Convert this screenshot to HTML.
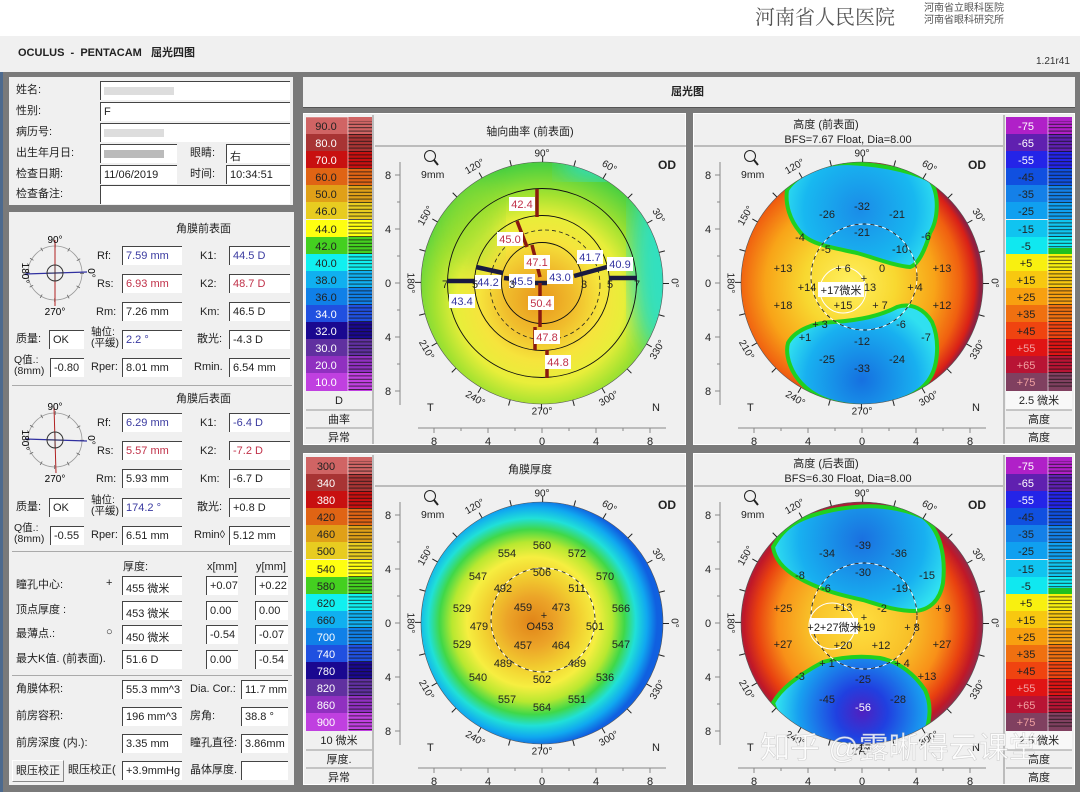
<!DOCTYPE html>
<html><head><meta charset="utf-8"><style>
*{margin:0;padding:0;box-sizing:border-box}
body{width:1080px;height:792px;overflow:hidden;position:relative;background:#7a7a7a;font-family:"Liberation Sans","Noto Sans CJK SC",sans-serif;font-size:11px;color:#222}
.a{position:absolute;white-space:nowrap;line-height:1}
.in{position:absolute;background:#fff;border-top:1px solid #444;border-left:1px solid #444;height:19px;padding:3px 0 0 3px;font-size:11px;white-space:nowrap;overflow:hidden}
.bl{color:#3a3aa0}.rd{color:#c03048}
svg text{font-family:"Liberation Sans","Noto Sans CJK SC",sans-serif}
</style></head><body>
<div class="a" style="left:0;top:0;width:1080px;height:36px;background:#fff"></div>
<div class="a" style="left:755px;top:6px;font-size:20px;color:#555;font-family:'Noto Serif CJK SC',serif">河南省人民医院</div>
<div class="a" style="left:924px;top:3px;font-size:10px;color:#555;line-height:12px">河南省立眼科医院<br>河南省眼科研究所</div>
<div class="a" style="left:0;top:36px;width:1080px;height:36px;background:#f0f0f0"></div>
<div class="a" style="left:18px;top:48px;font-size:11px;font-weight:bold;color:#222">OCULUS &nbsp;- &nbsp;PENTACAM &nbsp; 屈光四图</div>
<div class="a" style="left:1036px;top:57px;font-size:10px;color:#333">1.21r41</div>
<div class="a" style="left:0;top:72px;width:3px;height:720px;background:#4d6a8e"></div>

<!-- info box -->
<div class="a" style="left:9px;top:77px;width:284px;height:128px;background:#f0f0f0"></div>
<div class="a" style="left:16px;top:85px">姓名:</div>
<div class="a" style="left:16px;top:106px">性别:</div>
<div class="a" style="left:16px;top:127px">病历号:</div>
<div class="a" style="left:16px;top:148px">出生年月日:</div>
<div class="a" style="left:16px;top:169px">检查日期:</div>
<div class="a" style="left:16px;top:189px">检查备注:</div>
<div class="in" style="left:100px;top:81px;width:190px"><span style="display:inline-block;width:70px;height:8px;background:#ddd;margin-top:2px"></span></div>
<div class="in" style="left:100px;top:102px;width:190px">F</div>
<div class="in" style="left:100px;top:123px;width:190px"><span style="display:inline-block;width:60px;height:8px;background:#ddd;margin-top:2px"></span></div>
<div class="in" style="left:100px;top:144px;width:77px"><span style="display:inline-block;width:60px;height:8px;background:#bbb;margin-top:2px"></span></div>
<div class="a" style="left:190px;top:148px">眼睛:</div>
<div class="in" style="left:226px;top:144px;width:64px">右</div>
<div class="in" style="left:100px;top:165px;width:77px">11/06/2019</div>
<div class="a" style="left:190px;top:169px">时间:</div>
<div class="in" style="left:226px;top:165px;width:64px">10:34:51</div>
<div class="in" style="left:100px;top:185px;width:190px"></div>

<!-- data box -->
<div class="a" style="left:9px;top:212px;width:285px;height:573px;background:#f0f0f0"></div>
<div class="a" style="left:12px;top:385px;width:280px;height:1px;background:#aaa"></div>
<div class="a" style="left:12px;top:551px;width:280px;height:1px;background:#aaa"></div>
<div class="a" style="left:12px;top:675px;width:280px;height:1px;background:#aaa"></div>

<svg class="a" style="left:0;top:0" width="300" height="792">
 <g transform="translate(55,273)">
  <circle r="27" fill="none" stroke="#999" stroke-width="0.8"/>
  <circle r="27" fill="none" stroke="#666" stroke-width="4" stroke-dasharray="0.8 13.3"/>
  <line x1="0" y1="-33" x2="0" y2="33" stroke="#b02020"/>
  <line x1="-30" y1="1" x2="32" y2="-1" stroke="#3030a0" stroke-width="1.2"/>
  <circle r="8" fill="none" stroke="#333"/><line x1="-8" y1="0" x2="8" y2="0" stroke="#333" stroke-width=".6"/><line x1="0" y1="-8" x2="0" y2="8" stroke="#333" stroke-width=".6"/>
  <text x="0" y="-30" font-size="10" text-anchor="middle">90°</text>
  <text x="0" y="42" font-size="10" text-anchor="middle">270°</text>
  <text transform="translate(-33,0) rotate(90)" font-size="10" text-anchor="middle">180°</text>
  <text transform="translate(33,0) rotate(90)" font-size="10" text-anchor="middle">0°</text>
 </g>
 <g transform="translate(55,440)">
  <circle r="27" fill="none" stroke="#999" stroke-width="0.8"/>
  <circle r="27" fill="none" stroke="#666" stroke-width="4" stroke-dasharray="0.8 13.3"/>
  <line x1="-1" y1="-33" x2="1" y2="33" stroke="#b02020"/>
  <line x1="-30" y1="-1" x2="32" y2="1" stroke="#3030a0" stroke-width="1.2"/>
  <circle r="8" fill="none" stroke="#333"/><line x1="-8" y1="0" x2="8" y2="0" stroke="#333" stroke-width=".6"/><line x1="0" y1="-8" x2="0" y2="8" stroke="#333" stroke-width=".6"/>
  <text x="0" y="-30" font-size="10" text-anchor="middle">90°</text>
  <text x="0" y="42" font-size="10" text-anchor="middle">270°</text>
  <text transform="translate(-33,0) rotate(90)" font-size="10" text-anchor="middle">180°</text>
  <text transform="translate(33,0) rotate(90)" font-size="10" text-anchor="middle">0°</text>
 </g>
</svg>

<div class="a" style="left:176px;top:224px">角膜前表面</div>
<div class="a" style="left:97px;top:251px">Rf:</div><div class="in" style="left:122px;top:246px;width:60px"><span class="bl">7.59 mm</span></div>
<div class="a" style="left:200px;top:251px">K1:</div><div class="in" style="left:229px;top:246px;width:61px"><span class="bl">44.5 D</span></div>
<div class="a" style="left:97px;top:279px">Rs:</div><div class="in" style="left:122px;top:274px;width:60px"><span class="rd">6.93 mm</span></div>
<div class="a" style="left:200px;top:279px">K2:</div><div class="in" style="left:229px;top:274px;width:61px"><span class="rd">48.7 D</span></div>
<div class="a" style="left:96px;top:307px">Rm:</div><div class="in" style="left:122px;top:302px;width:60px">7.26 mm</div>
<div class="a" style="left:200px;top:307px">Km:</div><div class="in" style="left:229px;top:302px;width:61px">46.5 D</div>
<div class="a" style="left:16px;top:334px">质量:</div><div class="in" style="left:49px;top:330px;width:35px">OK</div>
<div class="a" style="left:91px;top:327px;font-size:10.5px;line-height:11px">轴位:<br>(平缓)</div><div class="in" style="left:122px;top:330px;width:60px"><span class="bl">2.2 °</span></div>
<div class="a" style="left:197px;top:334px">散光:</div><div class="in" style="left:229px;top:330px;width:61px">-4.3 D</div>
<div class="a" style="left:14px;top:355px;font-size:10.5px;line-height:11px">Q值.:<br>(8mm)</div><div class="in" style="left:50px;top:358px;width:34px">-0.80</div>
<div class="a" style="left:91px;top:362px">Rper:</div><div class="in" style="left:122px;top:358px;width:60px">8.01 mm</div>
<div class="a" style="left:194px;top:362px">Rmin.</div><div class="in" style="left:229px;top:358px;width:61px">6.54 mm</div>

<div class="a" style="left:176px;top:394px">角膜后表面</div>
<div class="a" style="left:97px;top:418px">Rf:</div><div class="in" style="left:122px;top:413px;width:60px"><span class="bl">6.29 mm</span></div>
<div class="a" style="left:200px;top:418px">K1:</div><div class="in" style="left:229px;top:413px;width:61px"><span class="bl">-6.4 D</span></div>
<div class="a" style="left:97px;top:446px">Rs:</div><div class="in" style="left:122px;top:441px;width:60px"><span class="rd">5.57 mm</span></div>
<div class="a" style="left:200px;top:446px">K2:</div><div class="in" style="left:229px;top:441px;width:61px"><span class="rd">-7.2 D</span></div>
<div class="a" style="left:96px;top:474px">Rm:</div><div class="in" style="left:122px;top:469px;width:60px">5.93 mm</div>
<div class="a" style="left:200px;top:474px">Km:</div><div class="in" style="left:229px;top:469px;width:61px">-6.7 D</div>
<div class="a" style="left:16px;top:502px">质量:</div><div class="in" style="left:49px;top:498px;width:35px">OK</div>
<div class="a" style="left:91px;top:495px;font-size:10.5px;line-height:11px">轴位:<br>(平缓)</div><div class="in" style="left:122px;top:498px;width:60px"><span class="bl">174.2 °</span></div>
<div class="a" style="left:197px;top:502px">散光:</div><div class="in" style="left:229px;top:498px;width:61px">+0.8 D</div>
<div class="a" style="left:14px;top:523px;font-size:10.5px;line-height:11px">Q值.:<br>(8mm)</div><div class="in" style="left:50px;top:526px;width:34px">-0.55</div>
<div class="a" style="left:91px;top:530px">Rper:</div><div class="in" style="left:122px;top:526px;width:60px">6.51 mm</div>
<div class="a" style="left:194px;top:530px">Rmin◊</div><div class="in" style="left:229px;top:526px;width:61px">5.12 mm</div>

<div class="a" style="left:123px;top:562px">厚度:</div>
<div class="a" style="left:207px;top:562px">x[mm]</div>
<div class="a" style="left:256px;top:562px">y[mm]</div>
<div class="a" style="left:16px;top:580px">瞳孔中心:</div><div class="a" style="left:106px;top:578px">+</div>
<div class="in" style="left:122px;top:576px;width:60px">455 微米</div><div class="in" style="left:206px;top:576px;width:32px">+0.07</div><div class="in" style="left:255px;top:576px;width:33px">+0.22</div>
<div class="a" style="left:16px;top:605px">顶点厚度 :</div>
<div class="in" style="left:122px;top:601px;width:60px">453 微米</div><div class="in" style="left:206px;top:601px;width:32px">0.00</div><div class="in" style="left:255px;top:601px;width:33px">0.00</div>
<div class="a" style="left:16px;top:629px">最薄点.:</div><div class="a" style="left:106px;top:627px">○</div>
<div class="in" style="left:122px;top:625px;width:60px">450 微米</div><div class="in" style="left:206px;top:625px;width:32px">-0.54</div><div class="in" style="left:255px;top:625px;width:33px">-0.07</div>
<div class="a" style="left:16px;top:654px">最大K值. (前表面).</div>
<div class="in" style="left:122px;top:650px;width:60px">51.6 D</div><div class="in" style="left:206px;top:650px;width:32px">0.00</div><div class="in" style="left:255px;top:650px;width:33px">-0.54</div>

<div class="a" style="left:16px;top:684px">角膜体积:</div><div class="in" style="left:122px;top:680px;width:60px">55.3 mm^3</div>
<div class="a" style="left:190px;top:684px">Dia. Cor.:</div><div class="in" style="left:241px;top:680px;width:47px">11.7 mm</div>
<div class="a" style="left:16px;top:711px">前房容积:</div><div class="in" style="left:122px;top:707px;width:60px">196 mm^3</div>
<div class="a" style="left:190px;top:711px">房角:</div><div class="in" style="left:241px;top:707px;width:47px">38.8 °</div>
<div class="a" style="left:16px;top:738px">前房深度 (内.):</div><div class="in" style="left:122px;top:734px;width:60px">3.35 mm</div>
<div class="a" style="left:190px;top:738px">瞳孔直径:</div><div class="in" style="left:241px;top:734px;width:47px">3.86mm</div>
<div class="a" style="left:12px;top:760px;width:52px;height:22px;background:#f0f0f0;border:1px solid #888;border-top-color:#fff;border-left-color:#fff;padding:5px 0 0 3px">眼压校正</div>
<div class="a" style="left:68px;top:765px">眼压校正(</div><div class="in" style="left:122px;top:761px;width:60px">+3.9mmHg</div>
<div class="a" style="left:190px;top:765px">晶体厚度.</div><div class="in" style="left:241px;top:761px;width:47px"></div>

<!-- header -->
<div class="a" style="left:303px;top:77px;width:772px;height:31px;background:#f0f0f0;border-bottom:1px solid #555"></div>
<div class="a" style="left:671px;top:87px;font-weight:bold">屈光图</div>

<svg class="a" style="left:0;top:0" width="1080" height="792">
<defs>
 <pattern id="h" width="30" height="3.4" patternUnits="userSpaceOnUse"><line x1="0" y1="0.5" x2="30" y2="0.5" stroke="#111" stroke-width="0.8"/></pattern>
 <radialGradient id="gK" cx="540" cy="300" r="135" gradientUnits="userSpaceOnUse">
  <stop offset="0" stop-color="#e8961c"/><stop offset=".25" stop-color="#f0bc2c"/><stop offset=".45" stop-color="#f6e43c"/><stop offset=".62" stop-color="#e8ee3a"/><stop offset=".78" stop-color="#a4e230"/><stop offset="1" stop-color="#4cd040"/></radialGradient>
 <radialGradient id="gE" cx="850" cy="284" r="130" gradientUnits="userSpaceOnUse">
  <stop offset="0" stop-color="#fff060"/><stop offset=".35" stop-color="#f8d830"/><stop offset=".65" stop-color="#f8a418"/><stop offset=".85" stop-color="#f06010"/><stop offset=".96" stop-color="#d82018"/><stop offset="1" stop-color="#902040"/></radialGradient>
 <radialGradient id="gE2" cx="860" cy="623" r="126" gradientUnits="userSpaceOnUse">
  <stop offset="0" stop-color="#ffe040"/><stop offset=".4" stop-color="#f8c028"/><stop offset=".65" stop-color="#f89018"/><stop offset=".82" stop-color="#e84010"/><stop offset=".92" stop-color="#c01828"/><stop offset="1" stop-color="#803058"/></radialGradient>
 <radialGradient id="gT" cx="532" cy="622" r="125" gradientUnits="userSpaceOnUse">
  <stop offset="0" stop-color="#e08418"/><stop offset=".2" stop-color="#eca428"/><stop offset=".38" stop-color="#f2d030"/><stop offset=".52" stop-color="#f6ee40"/><stop offset=".64" stop-color="#b8e830"/><stop offset=".74" stop-color="#40d848"/><stop offset=".83" stop-color="#20e0d8"/><stop offset=".92" stop-color="#10a8f0"/><stop offset="1" stop-color="#1060e0"/></radialGradient>
 <radialGradient id="gB1" cx="860" cy="210" r="80" gradientUnits="userSpaceOnUse"><stop offset="0" stop-color="#1a8ce8"/><stop offset=".7" stop-color="#18b8f0"/><stop offset="1" stop-color="#30e0f0"/></radialGradient>
 <radialGradient id="gB2" cx="862" cy="380" r="80" gradientUnits="userSpaceOnUse"><stop offset="0" stop-color="#1670e0"/><stop offset=".7" stop-color="#18b0f0"/><stop offset="1" stop-color="#30e0f0"/></radialGradient>
 <radialGradient id="gB3" cx="862" cy="540" r="90" gradientUnits="userSpaceOnUse"><stop offset="0" stop-color="#1a70e0"/><stop offset=".7" stop-color="#18b0f0"/><stop offset="1" stop-color="#30e0f0"/></radialGradient>
 <radialGradient id="gB4" cx="862" cy="712" r="85" gradientUnits="userSpaceOnUse"><stop offset="0" stop-color="#5020c0"/><stop offset=".3" stop-color="#2040e0"/><stop offset=".75" stop-color="#18a0f0"/><stop offset="1" stop-color="#30e0f0"/></radialGradient>
 <filter id="bl"><feGaussianBlur stdDeviation="12"/></filter>
 <clipPath id="c1"><circle cx="542" cy="283" r="121"/></clipPath>
 <clipPath id="c2"><circle cx="862" cy="283" r="121"/></clipPath>
 <clipPath id="c3"><circle cx="542" cy="623" r="121"/></clipPath>
 <clipPath id="c4"><circle cx="862" cy="623" r="121"/></clipPath>
</defs>

<!-- panel frames -->
<g fill="#f0f0f0" stroke="#fff" stroke-width="1">
 <rect x="303.5" y="113.5" width="382" height="331"/><rect x="693.5" y="113.5" width="381" height="331"/>
 <rect x="303.5" y="453.5" width="382" height="331"/><rect x="693.5" y="453.5" width="381" height="331"/>
</g>
<g stroke="#888" stroke-width="1">
 <line x1="373" y1="115" x2="373" y2="444"/><line x1="1004" y1="115" x2="1004" y2="444"/>
 <line x1="373" y1="455" x2="373" y2="784"/><line x1="1004" y1="455" x2="1004" y2="784"/>
 <line x1="375" y1="146" x2="686" y2="146"/><line x1="694" y1="146" x2="1003" y2="146"/>
 <line x1="375" y1="486" x2="686" y2="486"/><line x1="694" y1="486" x2="1003" y2="486"/>
</g>
<g font-size="11" text-anchor="middle" fill="#222">
 <text x="530" y="135">轴向曲率 (前表面)</text>
 <text x="826" y="128">高度 (前表面)</text><text x="848" y="143">BFS=7.67 Float, Dia=8.00</text>
 <text x="530" y="473">角膜厚度</text>
 <text x="826" y="467">高度 (后表面)</text><text x="848" y="482">BFS=6.30 Float, Dia=8.00</text>
</g>

<!-- SCALES -->
<g font-size="11" text-anchor="middle">
 <!-- TL -->
 <g transform="translate(306,117)">
  <rect y="0" width="66" height="17" fill="#d06464"/><rect y="17" width="66" height="17" fill="#a83434"/><rect y="34" width="66" height="17" fill="#c81010"/><rect y="51" width="66" height="17" fill="#e06414"/><rect y="68" width="66" height="17" fill="#e0a018"/><rect y="85" width="66" height="17" fill="#e8cc20"/><rect y="103" width="66" height="17" fill="#ffff10"/><rect y="120" width="66" height="17" fill="#44d020"/><rect y="137" width="66" height="17" fill="#10f0f0"/><rect y="154" width="66" height="17" fill="#10b0f0"/><rect y="171" width="66" height="17" fill="#1080e8"/><rect y="188" width="66" height="17" fill="#2050e0"/><rect y="205" width="66" height="17" fill="#1a0890"/><rect y="222" width="66" height="17" fill="#6030a0"/><rect y="239" width="66" height="17" fill="#9030c0"/><rect y="256" width="66" height="18" fill="#c040e0"/>
  <rect x="42" y="4" width="24" height="270" fill="url(#h)"/>
  <g stroke="#fff" stroke-width=".6"><line x1="0" y1="0" x2="42" y2="0"/><line x1="42" y1="0" x2="42" y2="274"/></g>
  <g fill="#222"><text x="20" y="13">90.0</text><text x="20" y="64">60.0</text><text x="20" y="81">50.0</text><text x="20" y="98">46.0</text><text x="20" y="116">44.0</text><text x="20" y="133">42.0</text><text x="20" y="150">40.0</text><text x="20" y="167">38.0</text><text x="20" y="184">36.0</text></g>
  <g fill="#fff"><text x="20" y="30">80.0</text><text x="20" y="47">70.0</text><text x="20" y="201">34.0</text><text x="20" y="218">32.0</text><text x="20" y="235">30.0</text><text x="20" y="252">20.0</text><text x="20" y="269">10.0</text></g>
  <g stroke="#999"><line x1="0" y1="293" x2="66" y2="293"/><line x1="0" y1="311" x2="66" y2="311"/></g>
  <g fill="#222"><text x="33" y="287">D</text><text x="33" y="306">曲率</text><text x="33" y="324">异常</text></g>
 </g>
 <!-- BL -->
 <g transform="translate(306,457)">
  <rect y="0" width="66" height="17" fill="#d06464"/><rect y="17" width="66" height="17" fill="#a83434"/><rect y="34" width="66" height="17" fill="#c81010"/><rect y="51" width="66" height="17" fill="#e06414"/><rect y="68" width="66" height="17" fill="#e0a018"/><rect y="85" width="66" height="17" fill="#e8cc20"/><rect y="103" width="66" height="17" fill="#ffff10"/><rect y="120" width="66" height="17" fill="#44d020"/><rect y="137" width="66" height="17" fill="#10f0f0"/><rect y="154" width="66" height="17" fill="#10b0f0"/><rect y="171" width="66" height="17" fill="#1080e8"/><rect y="188" width="66" height="17" fill="#2050e0"/><rect y="205" width="66" height="17" fill="#1a0890"/><rect y="222" width="66" height="17" fill="#6030a0"/><rect y="239" width="66" height="17" fill="#9030c0"/><rect y="256" width="66" height="18" fill="#c040e0"/>
  <rect x="42" y="4" width="24" height="270" fill="url(#h)"/>
  <g stroke="#fff" stroke-width=".6"><line x1="42" y1="0" x2="42" y2="274"/></g>
  <g fill="#222"><text x="20" y="13">300</text><text x="20" y="64">420</text><text x="20" y="81">460</text><text x="20" y="98">500</text><text x="20" y="116">540</text><text x="20" y="133">580</text><text x="20" y="150">620</text><text x="20" y="167">660</text></g>
  <g fill="#fff"><text x="20" y="30">340</text><text x="20" y="47">380</text><text x="20" y="184">700</text><text x="20" y="201">740</text><text x="20" y="218">780</text><text x="20" y="235">820</text><text x="20" y="252">860</text><text x="20" y="269">900</text></g>
  <g stroke="#999"><line x1="0" y1="293" x2="66" y2="293"/><line x1="0" y1="311" x2="66" y2="311"/></g>
  <g fill="#222"><text x="33" y="287">10 微米</text><text x="33" y="306">厚度.</text><text x="33" y="324">异常</text></g>
 </g>
 <!-- TR -->
 <g transform="translate(1006,117)">
  <rect y="0" width="66" height="17" fill="#b020c8"/><rect y="17" width="66" height="17" fill="#6020b0"/><rect y="34" width="66" height="17" fill="#2424e8"/><rect y="51" width="66" height="17" fill="#1050e0"/><rect y="68" width="66" height="17" fill="#1480e8"/><rect y="85" width="66" height="17" fill="#10a0f0"/><rect y="103" width="66" height="17" fill="#10c4f0"/><rect y="120" width="66" height="17" fill="#10e8f0"/><rect y="137" width="66" height="17" fill="#f8f010"/><rect y="154" width="66" height="17" fill="#f8c810"/><rect y="171" width="66" height="17" fill="#f8a010"/><rect y="188" width="66" height="17" fill="#f07010"/><rect y="205" width="66" height="17" fill="#f04410"/><rect y="222" width="66" height="17" fill="#e01414"/><rect y="239" width="66" height="17" fill="#b81434"/><rect y="256" width="66" height="18" fill="#804060"/>
  <rect x="42" y="4" width="24" height="268" fill="url(#h)"/><rect x="42" y="131" width="24" height="6" fill="#20c020"/>
  <g stroke="#fff" stroke-width=".6"><line x1="42" y1="0" x2="42" y2="274"/></g>
  <g fill="#fff"><text x="20" y="13">-75</text><text x="20" y="30">-65</text><text x="20" y="47">-55</text></g>
  <g fill="#222"><text x="20" y="64">-45</text><text x="20" y="81">-35</text><text x="20" y="98">-25</text><text x="20" y="116">-15</text><text x="20" y="133">-5</text><text x="20" y="150">+5</text><text x="20" y="167">+15</text><text x="20" y="184">+25</text><text x="20" y="201">+35</text><text x="20" y="218">+45</text></g>
  <g fill="#f0a0a0"><text x="20" y="235">+55</text><text x="20" y="252">+65</text><text x="20" y="269">+75</text></g>
  <rect x="0" y="274" width="66" height="19" fill="#f8f8f8"/>
  <g stroke="#999"><line x1="0" y1="293" x2="66" y2="293"/><line x1="0" y1="311" x2="66" y2="311"/></g>
  <g fill="#222"><text x="33" y="287">2.5 微米</text><text x="33" y="306">高度</text><text x="33" y="324">高度</text></g>
 </g>
 <!-- BR -->
 <g transform="translate(1006,457)">
  <rect y="0" width="66" height="17" fill="#b020c8"/><rect y="17" width="66" height="17" fill="#6020b0"/><rect y="34" width="66" height="17" fill="#2424e8"/><rect y="51" width="66" height="17" fill="#1050e0"/><rect y="68" width="66" height="17" fill="#1480e8"/><rect y="85" width="66" height="17" fill="#10a0f0"/><rect y="103" width="66" height="17" fill="#10c4f0"/><rect y="120" width="66" height="17" fill="#10e8f0"/><rect y="137" width="66" height="17" fill="#f8f010"/><rect y="154" width="66" height="17" fill="#f8c810"/><rect y="171" width="66" height="17" fill="#f8a010"/><rect y="188" width="66" height="17" fill="#f07010"/><rect y="205" width="66" height="17" fill="#f04410"/><rect y="222" width="66" height="17" fill="#e01414"/><rect y="239" width="66" height="17" fill="#b81434"/><rect y="256" width="66" height="18" fill="#804060"/>
  <rect x="42" y="4" width="24" height="268" fill="url(#h)"/><rect x="42" y="131" width="24" height="6" fill="#20c020"/>
  <g stroke="#fff" stroke-width=".6"><line x1="42" y1="0" x2="42" y2="274"/></g>
  <g fill="#fff"><text x="20" y="13">-75</text><text x="20" y="30">-65</text><text x="20" y="47">-55</text></g>
  <g fill="#222"><text x="20" y="64">-45</text><text x="20" y="81">-35</text><text x="20" y="98">-25</text><text x="20" y="116">-15</text><text x="20" y="133">-5</text><text x="20" y="150">+5</text><text x="20" y="167">+15</text><text x="20" y="184">+25</text><text x="20" y="201">+35</text><text x="20" y="218">+45</text></g>
  <g fill="#f0a0a0"><text x="20" y="235">+55</text><text x="20" y="252">+65</text><text x="20" y="269">+75</text></g>
  <rect x="0" y="274" width="66" height="19" fill="#f8f8f8"/>
  <g stroke="#999"><line x1="0" y1="293" x2="66" y2="293"/><line x1="0" y1="311" x2="66" y2="311"/></g>
  <g fill="#222"><text x="33" y="287">2.5 微米</text><text x="33" y="306">高度</text><text x="33" y="324">高度</text></g>
 </g>
</g>

<!-- MAP FILLS -->
<g clip-path="url(#c1)">
 <rect x="420" y="160" width="244" height="246" fill="url(#gK)"/>
 <ellipse cx="660" cy="260" rx="28" ry="90" fill="#30e0c0" filter="url(#bl)"/>
 <ellipse cx="600" cy="165" rx="40" ry="14" fill="#30e0d0" filter="url(#bl)"/>
 <ellipse cx="470" cy="220" rx="30" ry="50" fill="#90dc30" opacity=".5" filter="url(#bl)"/>
</g>
<g clip-path="url(#c2)">
 <rect x="740" y="160" width="244" height="246" fill="url(#gE)"/>
 <path d="M787,190 C800,170 830,163 847,163 C870,164 900,167 930,180 C940,195 938,220 930,233 C925,250 918,265 910,267 C895,266 875,258 857,253 C835,248 810,245 800,232 C790,220 785,205 787,190Z" fill="url(#gB1)" stroke="#20d020" stroke-width="4"/>
 <path d="M788,343 C795,330 815,322 835,322 C860,320 880,316 897,307 C912,302 925,310 932,322 C940,340 938,365 930,378 C920,395 895,405 863,406 C835,405 810,398 795,375 C787,362 786,350 788,343Z" fill="url(#gB2)" stroke="#20d020" stroke-width="4"/>
</g>
<g clip-path="url(#c3)">
 <rect x="420" y="500" width="244" height="246" fill="url(#gT)"/>
</g>
<g clip-path="url(#c4)">
 <rect x="740" y="500" width="244" height="246" fill="url(#gE2)"/>
 <path d="M773,547 C785,525 800,517 833,510 C860,505 890,503 923,517 C940,530 946,555 943,583 C940,600 930,610 915,611 C895,611 880,605 863,600 C840,595 820,590 797,577 C785,570 775,560 773,547Z" fill="url(#gB3)" stroke="#20d020" stroke-width="4"/>
 <path d="M773,703 C780,690 795,677 823,662 C845,656 865,656 880,658 C900,662 915,675 925,690 C932,705 930,720 925,735 C900,750 860,748 830,742 C800,735 780,725 773,703Z" fill="url(#gB4)" stroke="#20d020" stroke-width="4"/>
</g>

<!-- circle edges/ticks/axes per map -->
<g id="ax1" transform="translate(542,283)" font-size="10" fill="#222">
 <circle r="121" fill="none" stroke="#555" stroke-width=".6"/>
 <circle r="124" fill="none" stroke="#222" stroke-width="6" stroke-dasharray="1 31.46"/>
 <line x1="-142" y1="-121" x2="-142" y2="122" stroke="#888"/>
 <g stroke="#888"><line x1="-147" y1="-108" x2="-142" y2="-108"/><line x1="-147" y1="-54" x2="-142" y2="-54"/><line x1="-147" y1="0" x2="-142" y2="0"/><line x1="-147" y1="54" x2="-142" y2="54"/><line x1="-147" y1="108" x2="-142" y2="108"/><line x1="-145" y1="-81" x2="-142" y2="-81"/><line x1="-145" y1="-27" x2="-142" y2="-27"/><line x1="-145" y1="27" x2="-142" y2="27"/><line x1="-145" y1="81" x2="-142" y2="81"/>
 <line x1="-124" y1="145" x2="124" y2="145"/><line x1="-108" y1="145" x2="-108" y2="150"/><line x1="-54" y1="145" x2="-54" y2="150"/><line x1="0" y1="145" x2="0" y2="150"/><line x1="54" y1="145" x2="54" y2="150"/><line x1="108" y1="145" x2="108" y2="150"/><line x1="-81" y1="145" x2="-81" y2="148"/><line x1="-27" y1="145" x2="-27" y2="148"/><line x1="27" y1="145" x2="27" y2="148"/><line x1="81" y1="145" x2="81" y2="148"/></g>
 <g font-size="11" text-anchor="middle"><text x="-154" y="-104">8</text><text x="-154" y="-50">4</text><text x="-154" y="4">0</text><text x="-154" y="58">4</text><text x="-154" y="112">8</text>
 <text x="-108" y="162">8</text><text x="-54" y="162">4</text><text x="0" y="162">0</text><text x="54" y="162">4</text><text x="108" y="162">8</text></g>
 <g text-anchor="middle" dominant-baseline="central"><text x="0" y="-129">90°</text><text x="0" y="129">270°</text>
 <text transform="translate(67,-116) rotate(30)">60°</text><text transform="translate(116,-67) rotate(60)">30°</text><text transform="translate(132,0) rotate(90)">0°</text><text transform="translate(116,67) rotate(-60)">330°</text><text transform="translate(67,116) rotate(-30)">300°</text><text transform="translate(-67,116) rotate(30)">240°</text><text transform="translate(-116,67) rotate(60)">210°</text><text transform="translate(-132,0) rotate(90)">180°</text><text transform="translate(-116,-67) rotate(-60)">150°</text><text transform="translate(-67,-116) rotate(-30)">120°</text></g>
 <text x="116" y="-114" font-size="12" font-weight="bold">OD</text>
 <circle cx="-112" cy="-127" r="5.5" fill="none" stroke="#222"/><line x1="-108" y1="-123" x2="-104" y2="-118" stroke="#222" stroke-width="2"/>
 <text x="-121" y="-105" font-size="10.5">9mm</text>
 <text x="-115" y="128" font-size="11">T</text><text x="110" y="128" font-size="11">N</text>
</g>
<g transform="translate(862,283)" font-size="10" fill="#222">
 <circle r="121" fill="none" stroke="#555" stroke-width=".6"/>
 <circle r="124" fill="none" stroke="#222" stroke-width="6" stroke-dasharray="1 31.46"/>
 <line x1="-142" y1="-121" x2="-142" y2="122" stroke="#888"/>
 <g stroke="#888"><line x1="-147" y1="-108" x2="-142" y2="-108"/><line x1="-147" y1="-54" x2="-142" y2="-54"/><line x1="-147" y1="0" x2="-142" y2="0"/><line x1="-147" y1="54" x2="-142" y2="54"/><line x1="-147" y1="108" x2="-142" y2="108"/><line x1="-145" y1="-81" x2="-142" y2="-81"/><line x1="-145" y1="-27" x2="-142" y2="-27"/><line x1="-145" y1="27" x2="-142" y2="27"/><line x1="-145" y1="81" x2="-142" y2="81"/>
 <line x1="-124" y1="145" x2="124" y2="145"/><line x1="-108" y1="145" x2="-108" y2="150"/><line x1="-54" y1="145" x2="-54" y2="150"/><line x1="0" y1="145" x2="0" y2="150"/><line x1="54" y1="145" x2="54" y2="150"/><line x1="108" y1="145" x2="108" y2="150"/><line x1="-81" y1="145" x2="-81" y2="148"/><line x1="-27" y1="145" x2="-27" y2="148"/><line x1="27" y1="145" x2="27" y2="148"/><line x1="81" y1="145" x2="81" y2="148"/></g>
 <g font-size="11" text-anchor="middle"><text x="-154" y="-104">8</text><text x="-154" y="-50">4</text><text x="-154" y="4">0</text><text x="-154" y="58">4</text><text x="-154" y="112">8</text>
 <text x="-108" y="162">8</text><text x="-54" y="162">4</text><text x="0" y="162">0</text><text x="54" y="162">4</text><text x="108" y="162">8</text></g>
 <g text-anchor="middle" dominant-baseline="central"><text x="0" y="-129">90°</text><text x="0" y="129">270°</text>
 <text transform="translate(67,-116) rotate(30)">60°</text><text transform="translate(116,-67) rotate(60)">30°</text><text transform="translate(132,0) rotate(90)">0°</text><text transform="translate(116,67) rotate(-60)">330°</text><text transform="translate(67,116) rotate(-30)">300°</text><text transform="translate(-67,116) rotate(30)">240°</text><text transform="translate(-116,67) rotate(60)">210°</text><text transform="translate(-132,0) rotate(90)">180°</text><text transform="translate(-116,-67) rotate(-60)">150°</text><text transform="translate(-67,-116) rotate(-30)">120°</text></g>
 <text x="106" y="-114" font-size="12" font-weight="bold">OD</text>
 <circle cx="-112" cy="-127" r="5.5" fill="none" stroke="#222"/><line x1="-108" y1="-123" x2="-104" y2="-118" stroke="#222" stroke-width="2"/>
 <text x="-121" y="-105" font-size="10.5">9mm</text>
 <text x="-115" y="128" font-size="11">T</text><text x="110" y="128" font-size="11">N</text>
</g>
<g transform="translate(542,623)" font-size="10" fill="#222">
 <circle r="121" fill="none" stroke="#555" stroke-width=".6"/>
 <circle r="124" fill="none" stroke="#222" stroke-width="6" stroke-dasharray="1 31.46"/>
 <line x1="-142" y1="-121" x2="-142" y2="122" stroke="#888"/>
 <g stroke="#888"><line x1="-147" y1="-108" x2="-142" y2="-108"/><line x1="-147" y1="-54" x2="-142" y2="-54"/><line x1="-147" y1="0" x2="-142" y2="0"/><line x1="-147" y1="54" x2="-142" y2="54"/><line x1="-147" y1="108" x2="-142" y2="108"/><line x1="-145" y1="-81" x2="-142" y2="-81"/><line x1="-145" y1="-27" x2="-142" y2="-27"/><line x1="-145" y1="27" x2="-142" y2="27"/><line x1="-145" y1="81" x2="-142" y2="81"/>
 <line x1="-124" y1="145" x2="124" y2="145"/><line x1="-108" y1="145" x2="-108" y2="150"/><line x1="-54" y1="145" x2="-54" y2="150"/><line x1="0" y1="145" x2="0" y2="150"/><line x1="54" y1="145" x2="54" y2="150"/><line x1="108" y1="145" x2="108" y2="150"/><line x1="-81" y1="145" x2="-81" y2="148"/><line x1="-27" y1="145" x2="-27" y2="148"/><line x1="27" y1="145" x2="27" y2="148"/><line x1="81" y1="145" x2="81" y2="148"/></g>
 <g font-size="11" text-anchor="middle"><text x="-154" y="-104">8</text><text x="-154" y="-50">4</text><text x="-154" y="4">0</text><text x="-154" y="58">4</text><text x="-154" y="112">8</text>
 <text x="-108" y="162">8</text><text x="-54" y="162">4</text><text x="0" y="162">0</text><text x="54" y="162">4</text><text x="108" y="162">8</text></g>
 <g text-anchor="middle" dominant-baseline="central"><text x="0" y="-129">90°</text><text x="0" y="129">270°</text>
 <text transform="translate(67,-116) rotate(30)">60°</text><text transform="translate(116,-67) rotate(60)">30°</text><text transform="translate(132,0) rotate(90)">0°</text><text transform="translate(116,67) rotate(-60)">330°</text><text transform="translate(67,116) rotate(-30)">300°</text><text transform="translate(-67,116) rotate(30)">240°</text><text transform="translate(-116,67) rotate(60)">210°</text><text transform="translate(-132,0) rotate(90)">180°</text><text transform="translate(-116,-67) rotate(-60)">150°</text><text transform="translate(-67,-116) rotate(-30)">120°</text></g>
 <text x="116" y="-114" font-size="12" font-weight="bold">OD</text>
 <circle cx="-112" cy="-127" r="5.5" fill="none" stroke="#222"/><line x1="-108" y1="-123" x2="-104" y2="-118" stroke="#222" stroke-width="2"/>
 <text x="-121" y="-105" font-size="10.5">9mm</text>
 <text x="-115" y="128" font-size="11">T</text><text x="110" y="128" font-size="11">N</text>
</g>
<g transform="translate(862,623)" font-size="10" fill="#222">
 <circle r="121" fill="none" stroke="#555" stroke-width=".6"/>
 <circle r="124" fill="none" stroke="#222" stroke-width="6" stroke-dasharray="1 31.46"/>
 <line x1="-142" y1="-121" x2="-142" y2="122" stroke="#888"/>
 <g stroke="#888"><line x1="-147" y1="-108" x2="-142" y2="-108"/><line x1="-147" y1="-54" x2="-142" y2="-54"/><line x1="-147" y1="0" x2="-142" y2="0"/><line x1="-147" y1="54" x2="-142" y2="54"/><line x1="-147" y1="108" x2="-142" y2="108"/><line x1="-145" y1="-81" x2="-142" y2="-81"/><line x1="-145" y1="-27" x2="-142" y2="-27"/><line x1="-145" y1="27" x2="-142" y2="27"/><line x1="-145" y1="81" x2="-142" y2="81"/>
 <line x1="-124" y1="145" x2="124" y2="145"/><line x1="-108" y1="145" x2="-108" y2="150"/><line x1="-54" y1="145" x2="-54" y2="150"/><line x1="0" y1="145" x2="0" y2="150"/><line x1="54" y1="145" x2="54" y2="150"/><line x1="108" y1="145" x2="108" y2="150"/><line x1="-81" y1="145" x2="-81" y2="148"/><line x1="-27" y1="145" x2="-27" y2="148"/><line x1="27" y1="145" x2="27" y2="148"/><line x1="81" y1="145" x2="81" y2="148"/></g>
 <g font-size="11" text-anchor="middle"><text x="-154" y="-104">8</text><text x="-154" y="-50">4</text><text x="-154" y="4">0</text><text x="-154" y="58">4</text><text x="-154" y="112">8</text>
 <text x="-108" y="162">8</text><text x="-54" y="162">4</text><text x="0" y="162">0</text><text x="54" y="162">4</text><text x="108" y="162">8</text></g>
 <g text-anchor="middle" dominant-baseline="central"><text x="0" y="-129">90°</text><text x="0" y="129">270°</text>
 <text transform="translate(67,-116) rotate(30)">60°</text><text transform="translate(116,-67) rotate(60)">30°</text><text transform="translate(132,0) rotate(90)">0°</text><text transform="translate(116,67) rotate(-60)">330°</text><text transform="translate(67,116) rotate(-30)">300°</text><text transform="translate(-67,116) rotate(30)">240°</text><text transform="translate(-116,67) rotate(60)">210°</text><text transform="translate(-132,0) rotate(90)">180°</text><text transform="translate(-116,-67) rotate(-60)">150°</text><text transform="translate(-67,-116) rotate(-30)">120°</text></g>
 <text x="106" y="-114" font-size="12" font-weight="bold">OD</text>
 <circle cx="-112" cy="-127" r="5.5" fill="none" stroke="#222"/><line x1="-108" y1="-123" x2="-104" y2="-118" stroke="#222" stroke-width="2"/>
 <text x="-121" y="-105" font-size="10.5">9mm</text>
 <text x="-115" y="128" font-size="11">T</text><text x="110" y="128" font-size="11">N</text>
</g>

<!-- TL overlays -->
<g fill="none" stroke="#111" stroke-width="0.9">
 <circle cx="542" cy="283" r="40.5"/><circle cx="542" cy="283" r="67.5"/><circle cx="542" cy="283" r="94.5"/>
</g>
<circle cx="545" cy="285" r="55" fill="none" stroke="#222" stroke-width=".8" stroke-dasharray="4 3"/>
<g stroke="#1a1a40" stroke-width="4.5" stroke-linecap="butt">
 <line x1="447" y1="281" x2="476" y2="281"/><line x1="476" y1="267" x2="503" y2="273"/><line x1="504" y1="278" x2="513" y2="279"/><line x1="533" y1="283" x2="547" y2="283"/><line x1="574" y1="276" x2="607" y2="267"/><line x1="609" y1="278" x2="637" y2="278"/>
</g>
<g stroke="#8a1a10" stroke-width="3.5">
 <line x1="537" y1="189" x2="537" y2="217"/><line x1="517" y1="221" x2="527" y2="247"/><line x1="532" y1="245" x2="540" y2="277"/><line x1="540" y1="283" x2="540" y2="327"/><line x1="535" y1="327" x2="535" y2="350"/><line x1="547" y1="350" x2="547" y2="378"/>
</g>
<g font-size="11" text-anchor="middle">
 <g fill="#fff"><rect x="509" y="197" width="26" height="14"/><rect x="497" y="232" width="26" height="14"/><rect x="524" y="255" width="26" height="14"/><rect x="509" y="274" width="26" height="14"/><rect x="547" y="270" width="26" height="14"/><rect x="577" y="250" width="26" height="14"/><rect x="607" y="257" width="26" height="14"/><rect x="475" y="275" width="26" height="14"/><rect x="449" y="294" width="26" height="14"/><rect x="528" y="296" width="26" height="14"/><rect x="534" y="330" width="26" height="14"/><rect x="545" y="355" width="26" height="14"/></g>
 <g fill="#c03048"><text x="522" y="208">42.4</text><text x="510" y="243">45.0</text><text x="537" y="266">47.1</text><text x="541" y="307">50.4</text><text x="547" y="341">47.8</text><text x="558" y="366">44.8</text></g>
 <g fill="#3434a0"><text x="522" y="285">45.5</text><text x="560" y="281">43.0</text><text x="590" y="261">41.7</text><text x="620" y="268">40.9</text><text x="488" y="286">44.2</text><text x="462" y="305">43.4</text></g>
 <g fill="#222"><text x="445" y="288">7</text><text x="475" y="288">5</text><text x="512" y="288">3</text><text x="584" y="288">3</text><text x="610" y="288">5</text><text x="637" y="288">7</text></g>
</g>

<!-- TR overlays -->
<circle cx="864" cy="277" r="53" fill="none" stroke="#fff" stroke-width=".9"/>
<circle cx="864" cy="277" r="53" fill="none" stroke="#222" stroke-width=".9" stroke-dasharray="4 4"/>
<circle cx="843" cy="290" r="23" fill="none" stroke="#fff" stroke-width="1"/>
<rect x="818" y="282" width="46" height="15" fill="#fff"/>
<g font-size="11" text-anchor="middle" fill="#222">
 <text x="827" y="218">-26</text><text x="862" y="210">-32</text><text x="897" y="218">-21</text><text x="862" y="236">-21</text><text x="800" y="241">-4</text><text x="926" y="240">-6</text><text x="826" y="253">-5</text><text x="900" y="253">-10</text>
 <text x="783" y="272">+13</text><text x="843" y="272">+ 6</text><text x="882" y="272">0</text><text x="942" y="272">+13</text>
 <text x="807" y="291">+14</text><text x="841" y="294">+17微米</text><text x="870" y="291">13</text><text x="915" y="291">+ 4</text>
 <text x="783" y="309">+18</text><text x="843" y="309">+15</text><text x="880" y="309">+ 7</text><text x="942" y="309">+12</text>
 <text x="820" y="328">+ 3</text><text x="901" y="328">-6</text><text x="805" y="341">+1</text><text x="862" y="345">-12</text><text x="926" y="341">-7</text>
 <text x="827" y="363">-25</text><text x="862" y="372">-33</text><text x="897" y="363">-24</text>
 <text x="864" y="282">+</text>
</g>

<!-- BL overlays -->
<circle cx="543" cy="620" r="52" fill="none" stroke="#fff" stroke-width=".9"/>
<circle cx="543" cy="620" r="52" fill="none" stroke="#222" stroke-width=".9" stroke-dasharray="4 4"/>
<g font-size="11" text-anchor="middle" fill="#222">
 <text x="542" y="549">560</text><text x="507" y="557">554</text><text x="577" y="557">572</text><text x="478" y="580">547</text><text x="542" y="576">506</text><text x="605" y="580">570</text><text x="503" y="592">492</text><text x="577" y="592">511</text>
 <text x="462" y="612">529</text><text x="523" y="611">459</text><text x="561" y="611">473</text><text x="621" y="612">566</text>
 <text x="479" y="630">479</text><text x="540" y="630">O453</text><text x="595" y="630">501</text>
 <text x="462" y="648">529</text><text x="523" y="649">457</text><text x="561" y="649">464</text><text x="621" y="648">547</text>
 <text x="503" y="667">489</text><text x="577" y="667">489</text><text x="478" y="681">540</text><text x="542" y="683">502</text><text x="605" y="681">536</text>
 <text x="507" y="703">557</text><text x="577" y="703">551</text><text x="542" y="711">564</text>
 <text x="544" y="619">+</text>
</g>

<!-- BR overlays -->
<circle cx="864" cy="616" r="53" fill="none" stroke="#fff" stroke-width=".9"/>
<circle cx="864" cy="616" r="53" fill="none" stroke="#222" stroke-width=".9" stroke-dasharray="4 4"/>
<circle cx="832" cy="626" r="23" fill="none" stroke="#fff" stroke-width="1"/>
<rect x="810" y="618" width="48" height="16" fill="#fff"/>
<g font-size="11" text-anchor="middle" fill="#222">
 <text x="863" y="549">-39</text><text x="827" y="557">-34</text><text x="899" y="557">-36</text><text x="800" y="579">-8</text><text x="863" y="576">-30</text><text x="927" y="579">-15</text><text x="826" y="592">-6</text><text x="900" y="592">-19</text>
 <text x="783" y="612">+25</text><text x="843" y="611">+13</text><text x="882" y="612">-2</text><text x="943" y="612">+ 9</text>
 <text x="834" y="631">+2+27微米</text><text x="866" y="631">+19</text><text x="912" y="631">+ 8</text>
 <text x="783" y="648">+27</text><text x="843" y="649">+20</text><text x="881" y="649">+12</text><text x="942" y="648">+27</text>
 <text x="827" y="667">+ 1</text><text x="902" y="667">+ 4</text><text x="800" y="680">-3</text><text x="863" y="683">-25</text><text x="927" y="680">+13</text>
 <text x="827" y="703">-45</text><text x="898" y="703">-28</text><text x="863" y="711" fill="#fff">-56</text><text x="863" y="752">-27</text>
 <text x="864" y="621">+</text>
</g>

<!-- watermark -->
<text x="760" y="758" font-size="30" fill="#fff" fill-opacity=".85" stroke="#999" stroke-opacity=".4" stroke-width=".6" font-family="'Noto Sans CJK SC',sans-serif">知乎 @露晰得云课堂</text>
</svg>
</body></html>
